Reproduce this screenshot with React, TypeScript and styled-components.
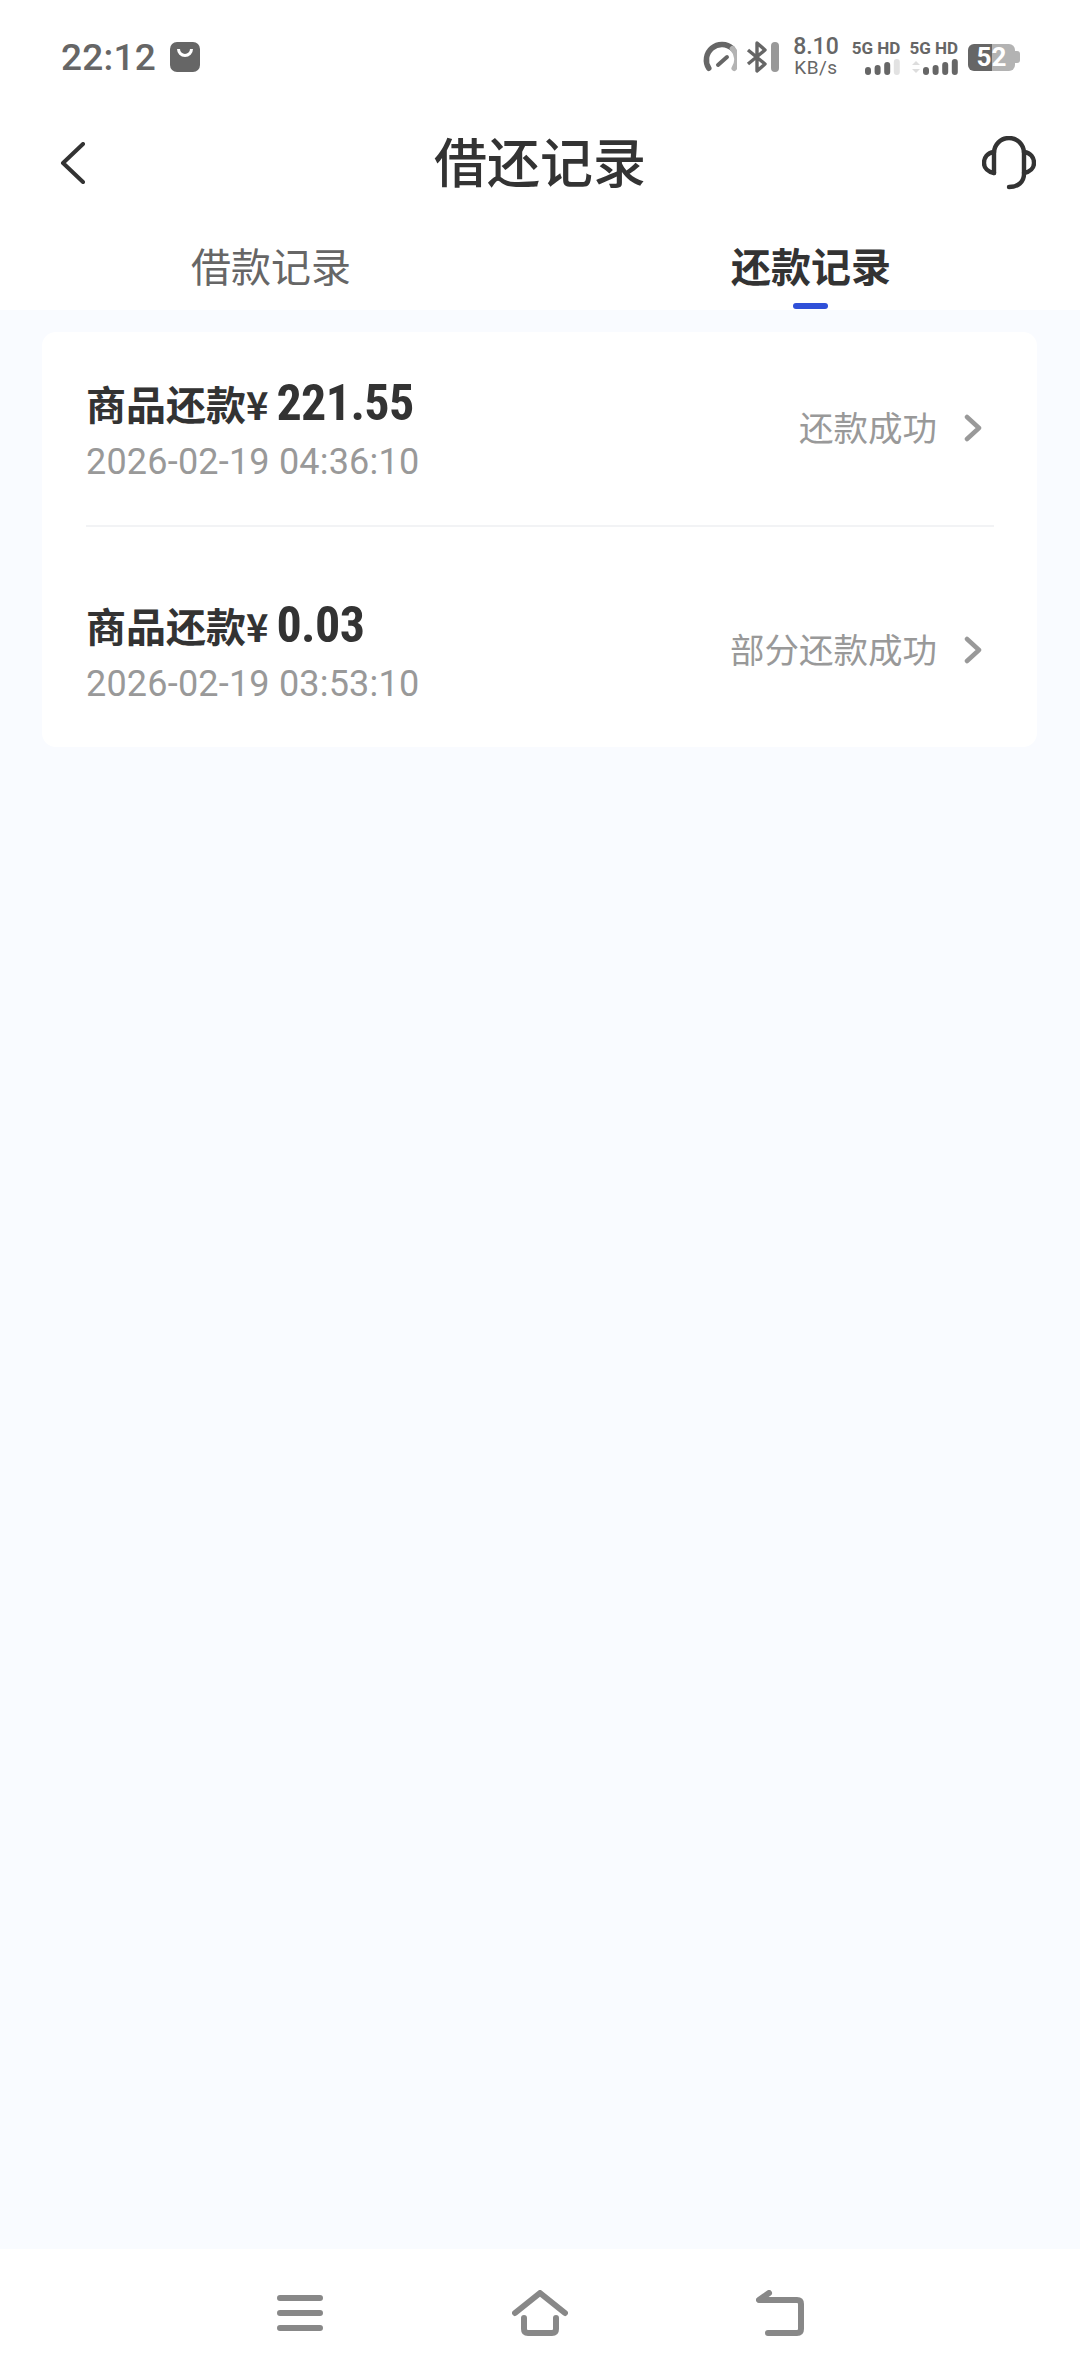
import * as React from "react";
import styled, { createGlobalStyle } from "styled-components";

const GlobalStyle = createGlobalStyle`
  html, body {
    margin: 0;
    padding: 0;
    background: #fff;
    font-family: Roboto, "Noto Sans CJK SC", sans-serif;
  }
`;

const Page = styled.div`
  display: flex;
  flex-direction: column;
  width: 1080px;
  height: 2376px;
  overflow: hidden;
  background: #f9fbff;
`;

const StatusBar = styled.div`
  display: flex;
  align-items: center;
  justify-content: space-between;
  height: 114px;
  padding: 0 60px 0 61px;
  box-sizing: border-box;
  background: #fff;
  color: #666;
`;

const StatusLeft = styled.div`
  display: flex;
  align-items: center;
  gap: 14px;
`;

const Clock = styled.span`
  font-size: 37px;
  font-weight: 500;
  letter-spacing: 0.2px;
`;

const StatusRight = styled.div`
  display: flex;
  align-items: center;
  gap: 9px;
`;

const Speed = styled.div`
  display: flex;
  flex-direction: column;
  align-items: center;
  margin: 0 4px 0 5px;
`;

const SpeedValue = styled.span`
  display: block;
  font-size: 23px;
  font-weight: 500;
  line-height: 22px;
`;

const SpeedUnit = styled.span`
  display: block;
  font-size: 19px;
  line-height: 20px;
  letter-spacing: 0.5px;
`;

const Signal = styled.div`
  display: flex;
  flex-direction: column;
  align-items: flex-end;
  gap: 2px;
`;

const SignalLabel = styled.span`
  display: block;
  font-size: 17px;
  font-weight: 700;
  line-height: 17px;
  white-space: nowrap;
`;

const BatteryGroup = styled.div`
  display: flex;
  align-items: center;
  margin-left: 1px;
`;

const Battery = styled.div`
  width: 47px;
  height: 27px;
  border-radius: 6px;
  background: linear-gradient(90deg, #666 0 52%, #b3b3b3 52% 100%);
  color: #fff;
  font-size: 26px;
  font-weight: 700;
  line-height: 27px;
  text-align: center;
`;

const BatteryCap = styled.div`
  width: 5px;
  height: 12px;
  border-radius: 0 3px 3px 0;
  background: #b3b3b3;
`;

const NavBar = styled.div`
  display: grid;
  grid-template-columns: 1fr auto 1fr;
  align-items: center;
  height: 98px;
  padding: 0 44px;
  background: #fff;
`;

const NavBack = styled.div`
  display: flex;
  padding-left: 16px;
`;

const NavTitle = styled.h1`
  margin: 0 0 6px;
  color: #333;
  font-size: 53px;
  font-weight: 500;
  font-family: "Noto Sans CJK SC", sans-serif;
`;

const NavAction = styled.div`
  display: flex;
  justify-content: flex-end;
`;

const Tabs = styled.div`
  display: flex;
  height: 98px;
  background: #fff;
`;

const Tab = styled.div<{ $active?: boolean }>`
  position: relative;
  flex: 1;
  text-align: center;
  padding: 23px 0 0 2px;
  box-sizing: border-box;
  font-family: "Noto Sans CJK SC", sans-serif;
  font-size: 40px;
  line-height: 60px;
  font-weight: ${(p) => (p.$active ? 700 : 400)};
  color: ${(p) => (p.$active ? "#333" : "#666")};

  ${(p) =>
    p.$active &&
    `&::after {
      content: "";
      position: absolute;
      left: 253px;
      bottom: 1px;
      width: 35px;
      height: 6px;
      border-radius: 3px;
      background: #3050d8;
    }`}
`;

const Content = styled.main`
  flex: 1;
  padding: 22px 43px 0 42px;
`;

const Card = styled.section`
  padding: 0 43px 0 44px;
  background: #fff;
  border-radius: 14px;
`;

const Row = styled.div`
  display: flex;
  align-items: center;
  justify-content: space-between;
  padding: 42px 0 38px;

  & + & {
    padding: 69px 0 38px;
    border-top: 2px solid #f2f3f5;
  }
`;

const RowMain = styled.div`
  display: flex;
  flex-direction: column;
`;

const RowTitle = styled.div`
  display: flex;
  align-items: baseline;
  height: 63px;
  color: #333;
  font-weight: 700;
`;

const TitleLabel = styled.span`
  font-family: "Noto Sans CJK SC", sans-serif;
  font-size: 40px;
`;

const Yen = styled.span`
  font-size: 38px;
  margin-right: 8px;
  font-family: "Noto Sans CJK SC", sans-serif;
`;

const Amount = styled.span`
  font-size: 50px;
  font-stretch: 82%;
  letter-spacing: -0.6px;
`;

const RowDate = styled.div`
  color: #999;
  font-size: 36px;
  line-height: 50px;
  letter-spacing: 0.2px;
`;

const RowStatus = styled.div`
  display: flex;
  align-items: center;
  gap: 27px;
  margin: 0 12px 10px 0;
  color: #999;
  font-family: "Noto Sans CJK SC", sans-serif;
  font-size: 34.5px;
`;

const ChevronSlot = styled.span`
  display: flex;
  margin-top: 4px;
`;

const BottomBar = styled.nav`
  display: flex;
  align-items: center;
  justify-content: center;
  gap: 140px;
  height: 127px;
  background: #fff;
`;

const IconSlot = styled.div`
  display: flex;
  justify-content: center;
  width: 100px;
`;

const Chevron = () => (
  <ChevronSlot>
    <svg width="18" height="28" viewBox="0 0 18 28" fill="none">
      <path d="M3 3l12 11L3 25" stroke="#999" strokeWidth="4.5" strokeLinecap="round" strokeLinejoin="round" />
    </svg>
  </ChevronSlot>
);

const Gauge = () => (
  <svg width="37" height="32" viewBox="-3 0 37 32" fill="none" strokeWidth="5.5" strokeLinecap="round">
    <path d="M5.8 27.3A15.5 15.5 0 0 1 29.4 7.6" stroke="#666" />
    <path d="M29.4 7.6A15.5 15.5 0 0 1 31.2 27.3" stroke="#b3b3b3" />
    <path d="M15 24l9-8" stroke="#666" strokeWidth="4" />
  </svg>
);

const Bluetooth = () => (
  <svg width="33" height="32" viewBox="0 0 33 32" fill="none">
    <path d="M2 9l17 14-8 7V2l8 7L2 23" stroke="#666" strokeWidth="3.4" strokeLinejoin="round" />
    <rect x="25" y="1" width="8" height="30" rx="4" fill="#999" />
  </svg>
);

const Bars = ({ levels, lit, arrows }: { levels: number[]; lit: number; arrows?: boolean }) => (
  <svg width={arrows ? 47 : 36} height="16" viewBox={`0 0 ${arrows ? 47 : 36} 16`}>
    {arrows && <path d="M1 6l4-4 4 4zM1 10l4 4 4-4z" fill="#ddd" />}
    {levels.map((h, i) => (
      <rect
        key={i}
        x={(arrows ? 12 : 1) + i * 9.6}
        y={16 - h}
        width="6"
        height={h}
        rx="3"
        fill={i < lit ? "#666" : "#e2e2e2"}
      />
    ))}
  </svg>
);

const Bag = () => (
  <svg width="30" height="30" viewBox="0 0 30 30">
    <rect width="30" height="30" rx="7" fill="#666" />
    <path d="M8.5 7a6.5 6.5 0 0 0 13 0" fill="none" stroke="#fff" strokeWidth="3" />
  </svg>
);

const BackArrow = () => (
  <svg width="26" height="42" viewBox="0 0 26 42" fill="none">
    <path d="M23 2L3 21l20 19" stroke="#333" strokeWidth="4" strokeLinecap="round" strokeLinejoin="round" />
  </svg>
);

const Headset = () => (
  <svg width="54" height="54" viewBox="0 0 54 54" fill="none" stroke="#333" strokeWidth="4.4" strokeLinecap="round">
    <path d="M12 37V17a15 15 0 0 1 30 0v21c0 8-6 13-15 13" />
    <path d="M12 16C5 17 2 22 2 27s4 9 10 10" />
    <path d="M42 16c7 1 10 6 10 11s-4 9-10 10" />
  </svg>
);

const MenuIcon = () => (
  <svg width="46" height="36" viewBox="0 0 46 36" fill="none" stroke="#888" strokeWidth="6" strokeLinecap="round">
    <path d="M3 3h40M3 18h40M3 33h40" />
  </svg>
);

const HomeIcon = () => (
  <svg width="56" height="46" viewBox="0 0 56 46" fill="none" stroke="#888" strokeWidth="6" strokeLinecap="round" strokeLinejoin="round">
    <path d="M3 23L28 3l25 20" />
    <path d="M12 28v11q0 4 4 4h24q4 0 4-4V28" />
  </svg>
);

const ReturnIcon = () => (
  <svg width="48" height="46" viewBox="0 0 48 46" fill="none" stroke="#888" strokeWidth="6" strokeLinecap="round" strokeLinejoin="round">
    <path d="M13 3L3 10h38q4 0 4 4v25q0 4-4 4H12" />
  </svg>
);

const records = [
  { id: 1, amount: "221.55", date: "2026-02-19 04:36:10", status: "还款成功" },
  { id: 2, amount: "0.03", date: "2026-02-19 03:53:10", status: "部分还款成功" },
];

export default function App() {
  return (
    <Page>
      <GlobalStyle />
      <StatusBar>
        <StatusLeft>
          <Clock>22:12</Clock>
          <Bag />
        </StatusLeft>
        <StatusRight>
          <Gauge />
          <Bluetooth />
          <Speed>
            <SpeedValue>8.10</SpeedValue>
            <SpeedUnit>KB/s</SpeedUnit>
          </Speed>
          <Signal>
            <SignalLabel>5G HD</SignalLabel>
            <Bars levels={[8, 10, 13, 16]} lit={3} />
          </Signal>
          <Signal>
            <SignalLabel>5G HD</SignalLabel>
            <Bars levels={[8, 10, 13, 16]} lit={4} arrows />
          </Signal>
          <BatteryGroup>
            <Battery>52</Battery>
            <BatteryCap />
          </BatteryGroup>
        </StatusRight>
      </StatusBar>
      <NavBar>
        <NavBack>
          <BackArrow />
        </NavBack>
        <NavTitle>借还记录</NavTitle>
        <NavAction>
          <Headset />
        </NavAction>
      </NavBar>
      <Tabs>
        <Tab>借款记录</Tab>
        <Tab $active>还款记录</Tab>
      </Tabs>
      <Content>
        <Card>
          {records.map((r) => (
            <Row key={r.id}>
              <RowMain>
                <RowTitle>
                  <TitleLabel>商品还款</TitleLabel>
                  <Yen>¥</Yen>
                  <Amount>{r.amount}</Amount>
                </RowTitle>
                <RowDate>{r.date}</RowDate>
              </RowMain>
              <RowStatus>
                {r.status}
                <Chevron />
              </RowStatus>
            </Row>
          ))}
        </Card>
      </Content>
      <BottomBar>
        <IconSlot>
          <MenuIcon />
        </IconSlot>
        <IconSlot>
          <HomeIcon />
        </IconSlot>
        <IconSlot>
          <ReturnIcon />
        </IconSlot>
      </BottomBar>
    </Page>
  );
}
